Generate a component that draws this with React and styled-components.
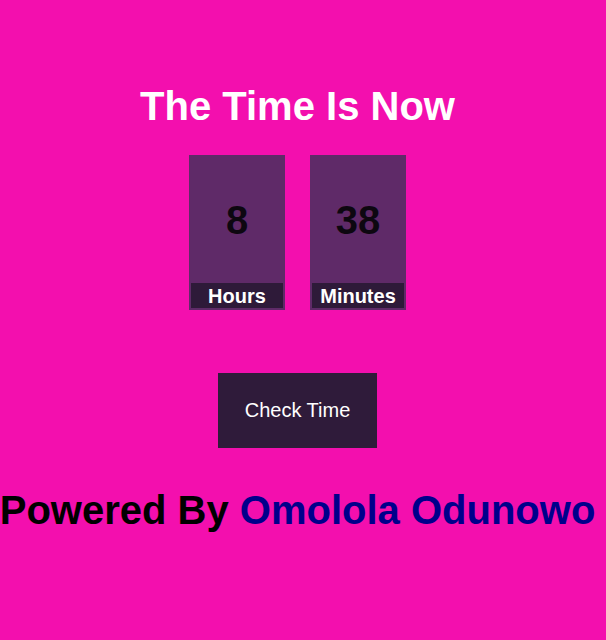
import React from "react";
import styled, { createGlobalStyle } from "styled-components";

const Global = createGlobalStyle`
  html, body {
    margin: 0;
    padding: 0;
    background: #f30fae;
    font-family: "Liberation Sans", Arial, sans-serif;
  }
`;

const Page = styled.main`
  width: 595px;
  min-height: 640px;
  display: flex;
  flex-direction: column;
  align-items: center;
  padding-top: 83px;
  box-sizing: border-box;
`;

const Title = styled.h1`
  margin: 0;
  font-size: 40px;
  line-height: 46px;
  font-weight: bold;
  color: #ffffff;
`;

const Clock = styled.div`
  display: flex;
  gap: 25px;
  margin-top: 26px;
`;

const Unit = styled.div`
  width: 96px;
  height: 155px;
  box-sizing: border-box;
  padding: 2px;
  background: #5f2a68;
  display: flex;
  flex-direction: column;
`;

const Value = styled.div`
  flex: 1;
  display: flex;
  align-items: center;
  justify-content: center;
  font-size: 40px;
  font-weight: bold;
  color: #0d0710;
`;

const Label = styled.div`
  height: 25px;
  box-sizing: border-box;
  padding-top: 2px;
  background: #2e1a39;
  color: #ffffff;
  font-size: 20px;
  font-weight: bold;
  display: flex;
  align-items: center;
  justify-content: center;
`;

const Button = styled.button`
  margin-top: 63px;
  width: 159px;
  height: 75px;
  border: none;
  background: #2f1b3a;
  color: #ffffff;
  font-family: "Liberation Sans", Arial, sans-serif;
  font-size: 20px;
  cursor: pointer;
`;

const Footer = styled.p`
  margin: 39px 0 0;
  font-size: 40px;
  line-height: 46px;
  font-weight: bold;
  color: #000000;
  white-space: nowrap;
  text-align: center;
`;

const Name = styled.span`
  color: #00008b;
`;

export default function App() {
  return (
    <>
      <Global />
      <Page>
        <Title>The Time Is Now</Title>
        <Clock>
          <Unit>
            <Value>8</Value>
            <Label>Hours</Label>
          </Unit>
          <Unit>
            <Value>38</Value>
            <Label>Minutes</Label>
          </Unit>
        </Clock>
        <Button>Check Time</Button>
        <Footer>
          Powered By <Name>Omolola Odunowo</Name>
        </Footer>
      </Page>
    </>
  );
}
